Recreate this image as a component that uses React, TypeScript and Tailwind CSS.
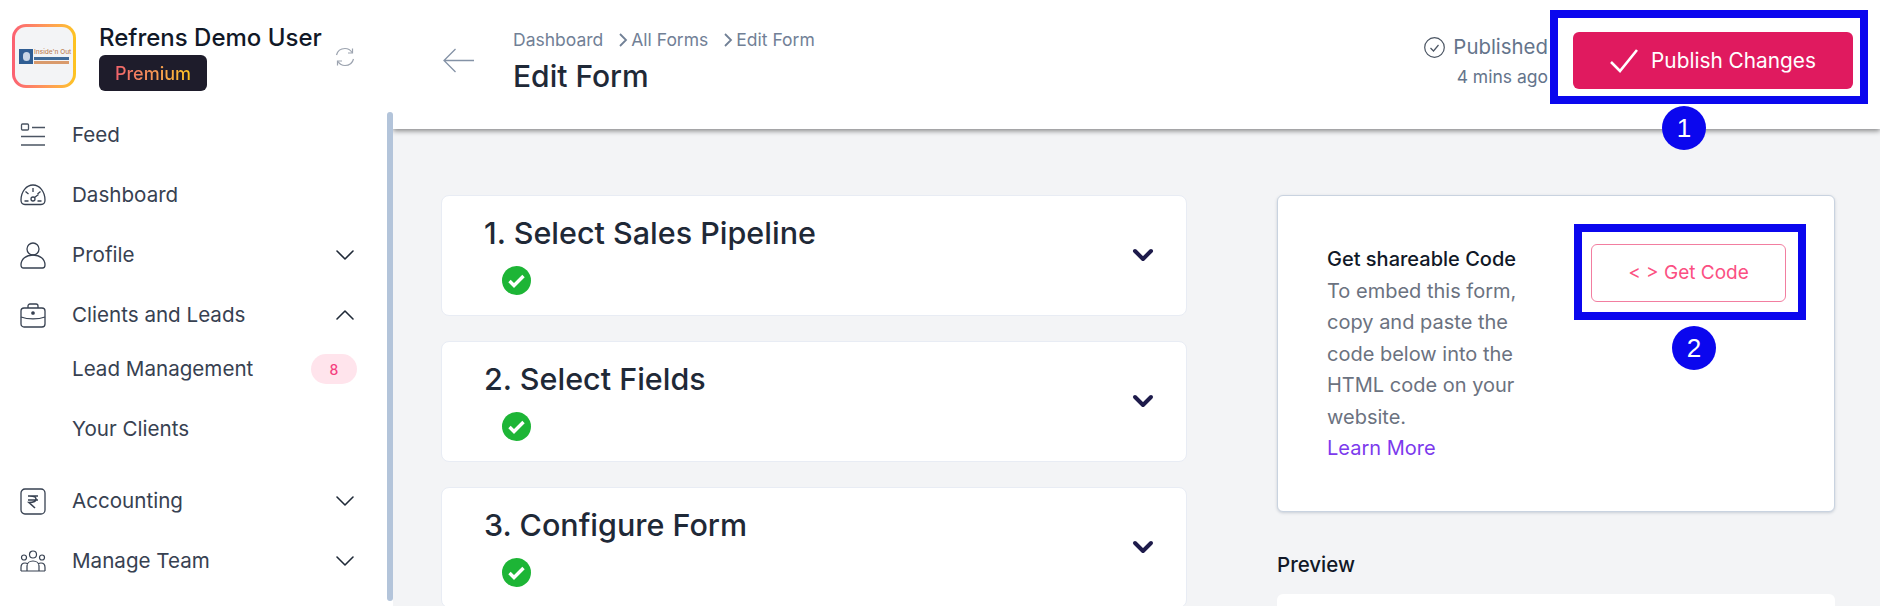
import { ChevronDown, ChevronUp } from "lucide-react";
import type { ReactNode } from "react";

const FeedIcon = () => (
  <svg width="26" height="24" viewBox="0 0 26 24" fill="none" stroke="#4b5563" strokeWidth="1.3">
    <rect x="1.5" y="1" width="7" height="6" rx="1" />
    <path d="M12 4.5h13M1 13.5h24M1 22h24" />
  </svg>
);

const GaugeIcon = () => (
  <svg width="26" height="22" viewBox="0 0 26 22" fill="none" stroke="#374151" strokeWidth="1.3">
    <path d="M5 20.5h16c2.5 0 4-1.5 4-4.500C25 7.500 19.500 1 13 1S1 7.500 1 16c0 3 1.500 4.500 4 4.500Z" />
    <path d="M13 4v4M5.500 7.500l3 2.500M20.500 7.500l-3 2.500M4.500 17h4M17.500 17h4M14.500 13.500l4-3" />
    <circle cx="13" cy="15" r="2" />
  </svg>
);

const UserIcon = () => (
  <svg width="26" height="27" viewBox="0 0 26 27" fill="none" stroke="#374151" strokeWidth="1.3">
    <circle cx="13" cy="7" r="6" />
    <path d="M1 23c0-6 5-10 12-10s12 4 12 10c0 2-1 3-2.500 3h-19C2 26 1 25 1 23Z" />
  </svg>
);

const BriefcaseIcon = () => (
  <svg width="26" height="25" viewBox="0 0 26 25" fill="none" stroke="#374151" strokeWidth="1.3">
    <rect x="1" y="5" width="24" height="19" rx="3" />
    <path d="M8 5V3c0-1 .8-2 2-2h6c1.200 0 2 1 2 2v2M1 14c7 2.500 17 2.500 24 0" />
    <circle cx="13" cy="10" r="1.200" fill="#374151" />
  </svg>
);

const RupeeIcon = () => (
  <svg width="26" height="27" viewBox="0 0 26 27" fill="none" stroke="#374151" strokeWidth="1.3">
    <rect x="1" y="1" width="24" height="25" rx="4" />
    <path d="M8 8h10M8 12h10M9 8c6 0 7 1 7 3s-2 3.500-7 3.500L15 20" strokeWidth="1.600" />
  </svg>
);

const TeamIcon = () => (
  <svg width="26" height="22" viewBox="0 0 26 22" fill="none" stroke="#374151" strokeWidth="1.200">
    <circle cx="13" cy="4.500" r="3.500" />
    <circle cx="4" cy="7.500" r="2.500" />
    <circle cx="22" cy="7.500" r="2.500" />
    <path d="M7 21v-5c0-3 2.500-5 6-5s6 2 6 5v5M1 21v-3.500C1 15 2.500 13 5 13c1 0 2 .3 3 1M25 21v-3.500c0-2.500-1.500-4.500-4-4.500-1 0-2 .3-3 1M1 21h24" />
  </svg>
);

const SyncIcon = () => (
  <svg width="20" height="20" viewBox="0 0 20 20" fill="none" stroke="#9ca3af" strokeWidth="1.200">
    <path d="M1.500 8C2.500 4 6 1.500 10 1.500c3 0 5.500 1.500 7 4M18.500 12c-1 4-4.500 6.500-8.500 6.500-3 0-5.500-1.500-7-4" />
    <path d="M17.500 1.500v4.500H13M2.500 18.500V14H7" />
  </svg>
);

const GreenCheck = () => (
  <svg width="29" height="29" viewBox="0 0 29 29">
    <circle cx="14.500" cy="14.500" r="14.500" fill="#1db536" />
    <path d="M7.500 15l4.500 4.500L21.500 10" fill="none" stroke="white" strokeWidth="3.400" />
  </svg>
);

const navTop = [
  { label: "Feed", icon: <FeedIcon /> },
  { label: "Dashboard", icon: <GaugeIcon /> },
  { label: "Profile", icon: <UserIcon />, chevron: "down" },
  { label: "Clients and Leads", icon: <BriefcaseIcon />, chevron: "up" },
];

const NavRow = ({ icon, label, chevron }: { icon: ReactNode; label: string; chevron?: string }) => (
  <div className="flex h-[60px] items-center text-[20.600px] text-[#374151]">
    <span className="box-content flex w-[52px] justify-start pl-[20px]">{icon}</span>
    <span>{label}</span>
    {chevron === "down" && <ChevronDown className="ml-auto mr-[32px] text-[#1f2937]" size={32} strokeWidth={1.2} />}
    {chevron === "up" && <ChevronUp className="ml-auto mr-[32px] text-[#1f2937]" size={32} strokeWidth={1.2} />}
  </div>
);

const Sidebar = () => (
  <aside className="relative z-20 h-[606px] w-[393px] shrink-0 bg-white">
    <div className="flex h-[105px] items-start pl-[12px] pt-[24px]">
      <div className="h-[64px] w-[64px] rounded-[14px] bg-gradient-to-r from-[#fb5f72] to-[#fdc41c] p-[3px]">
        <div className="flex h-full w-full items-center justify-center gap-[1px] rounded-[11px] bg-[#f3f4f6]">
          <div className="flex h-[15px] w-[14px] items-center justify-center bg-[#2f5d93]">
            <div className="h-[9px] w-[7px] rounded-full bg-[#c9d6e6]" />
          </div>
          <div className="flex w-[35px] flex-col">
            <span className="text-[6.500px] leading-[7px] font-medium whitespace-nowrap text-[#c08457]">Inside'n Out</span>
            <div className="mt-[1px] h-[3px] bg-[#3f6a98]" />
            <div className="mt-[1px] h-[3px] bg-[#d99a6c]" />
          </div>
        </div>
      </div>
      <div className="ml-[23px]">
        <p className="mt-[1px] text-[24px] leading-[26px] font-medium text-[#111827]">Refrens Demo User</p>
        <div className="mt-[4px] flex h-[36px] w-[108px] items-center justify-center rounded-[6px] bg-[#1e1c2b]">
          <span className="bg-gradient-to-r from-[#f0616b] to-[#fcc419] bg-clip-text text-[18px] font-medium text-transparent">
            Premium
          </span>
        </div>
      </div>
      <div className="ml-auto mr-[38px] mt-[23px]">
        <SyncIcon />
      </div>
    </div>
    {navTop.map((item) => (
      <NavRow key={item.label} {...item} />
    ))}
    <div className="-mt-[6px] flex h-[60px] items-center pl-[72px] pr-[36px] text-[20.600px] text-[#374151]">
      <span>Lead Management</span>
      <span className="ml-auto flex h-[30px] w-[46px] items-center justify-center rounded-full bg-[#ffe4ec] text-[14px] font-medium text-[#f43f7f]">
        8
      </span>
    </div>
    <div className="flex h-[60px] items-center pl-[72px] text-[20.600px] text-[#374151]">Your Clients</div>
    <div className="mt-[12px]">
      <NavRow label="Accounting" icon={<RupeeIcon />} chevron="down" />
      <NavRow label="Manage Team" icon={<TeamIcon />} chevron="down" />
    </div>
    <div className="absolute top-[112px] right-0 h-[489px] w-[6px] rounded-full bg-[#b3c4da]" />
  </aside>
);

const Crumb = () => (
  <svg className="ml-[16px] mr-[3px]" width="9" height="14" viewBox="0 0 9 14" fill="none" stroke="#718096" strokeWidth="1.800">
    <path d="M1 1l6 6-6 6" />
  </svg>
);

const Header = () => (
  <header className="relative z-10 flex h-[129px] shrink-0 items-start bg-white shadow-[0_2px_5px_rgba(0,0,0,0.45)]">
    <svg className="ml-[50px] mt-[48px]" width="32" height="25" viewBox="0 0 32 25" fill="none" stroke="#8492a6" strokeWidth="1.300">
      <path d="M12.500 1L1 12.500 12.500 24M1 12.500h30" />
    </svg>
    <div className="ml-[38px] mt-[29px]">
      <div className="flex h-[22px] items-center text-[17.500px] text-[#718096]">
        <span>Dashboard</span>
        <Crumb />
        <span>All Forms</span>
        <Crumb />
        <span>Edit Form</span>
      </div>
      <h1 className="mt-[7px] text-[30px] leading-[36px] font-medium text-[#1f2937]">Edit Form</h1>
    </div>
    <div className="ml-auto mt-[32px] flex flex-col items-end">
      <div className="flex h-[30px] items-center gap-[8px] text-[20.400px] text-[#64748b]">
        <svg width="21" height="21" viewBox="0 0 21 21" fill="none" stroke="#4b5563" strokeWidth="1.200">
          <circle cx="10.500" cy="10.500" r="9.800" />
          <path d="M6.500 11l3 3 5-6" />
        </svg>
        <span>Published</span>
      </div>
      <span className="mt-[2px] text-[17.500px] leading-[26px] text-[#64748b]">4 mins ago</span>
    </div>
    <button className="ml-[25px] mr-[27px] mt-[32px] flex h-[57px] w-[280px] items-center justify-center gap-[13px] rounded-[6px] bg-[#e01a5f] text-[20.800px] text-white">
      <svg width="28" height="24" viewBox="0 0 28 24" fill="none" stroke="white" strokeWidth="2.600">
        <path d="M1 13l9 9L27 1" />
      </svg>
      Publish Changes
    </button>
  </header>
);

const steps = ["1. Select Sales Pipeline", "2. Select Fields", "3. Configure Form"];

const StepCard = ({ title }: { title: string }) => (
  <div className="relative h-[121px] shrink-0 rounded-[8px] border border-[#e8ecf4] bg-white pl-[42px] pt-[17px]">
    <h2 className="text-[30.500px] leading-[40px] font-medium text-[#1f2937]">{title}</h2>
    <div className="ml-[18px] mt-[13px] w-fit">
      <GreenCheck />
    </div>
    <ChevronDown className="absolute top-[43px] right-[27px] text-[#1e1b4b]" size={32} strokeWidth={3} />
  </div>
);

const CodeCard = () => (
  <div className="flex h-[317px] rounded-[6px] border border-[#c9d3e0] bg-white pl-[49px] shadow-[0_1px_3px_rgba(100,116,139,0.3)]">
    <div className="mt-[48px] w-[197px] shrink-0 text-[20px] leading-[31.500px] text-[#6b7280]">
      <p className="font-medium whitespace-nowrap text-[#111827]">Get shareable Code</p>
      <p>To embed this form, copy and paste the code below into the HTML code on your website.</p>
      <p className="text-[#7c3aed]">Learn More</p>
    </div>
    <button className="ml-[67px] mt-[48px] flex h-[58px] w-[195px] items-center justify-center rounded-[6px] border border-[#f27ea0] text-[19px] text-[#fb4f82]">
      {"< > Get Code"}
    </button>
  </div>
);

const Annotations = () => (
  <>
    <div className="absolute top-[10px] left-[1550px] z-30 h-[94px] w-[318px] border-[8px] border-[#0b07ee]" />
    <div className="absolute top-[106px] left-[1662px] z-30 flex h-[44px] w-[44px] items-center justify-center rounded-full bg-[#0b07ee] font-['Liberation_Sans',sans-serif] text-[26px] text-white">
      1
    </div>
    <div className="absolute top-[224px] left-[1574px] z-30 h-[96px] w-[232px] border-[8px] border-[#0b07ee]" />
    <div className="absolute top-[326px] left-[1672px] z-30 flex h-[44px] w-[44px] items-center justify-center rounded-full bg-[#0b07ee] font-['Liberation_Sans',sans-serif] text-[26px] text-white">
      2
    </div>
  </>
);

export default function App() {
  return (
    <div className="relative flex h-[606px] w-[1880px] overflow-hidden bg-[#f3f4f6] font-['Inter',sans-serif]">
      <Sidebar />
      <main className="flex min-w-0 flex-1 flex-col">
        <Header />
        <div className="flex gap-[90px] pl-[48px] pt-[66px]">
          <div className="flex w-[746px] flex-col gap-[25px]">
            {steps.map((title) => (
              <StepCard key={title} title={title} />
            ))}
          </div>
          <div className="w-[558px]">
            <CodeCard />
            <p className="mt-[40px] text-[20.500px] leading-[26px] font-medium text-[#111827]">Preview</p>
            <div className="mt-[16px] h-[120px] rounded-[6px] bg-white" />
          </div>
        </div>
      </main>
      <Annotations />
    </div>
  );
}
